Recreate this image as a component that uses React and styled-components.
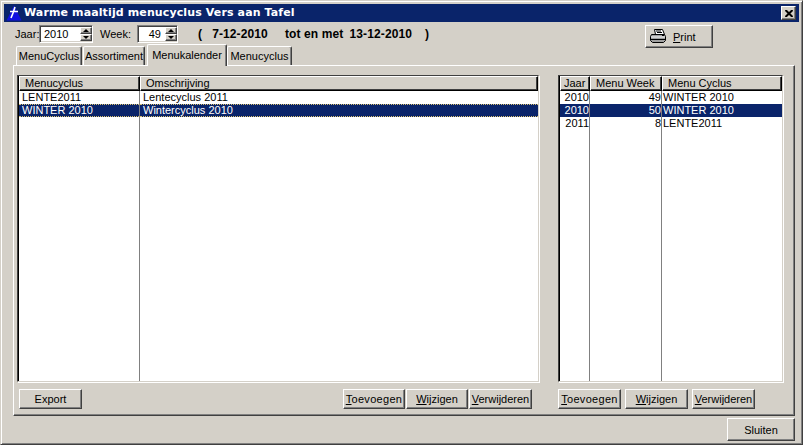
import React from 'react';
import styled, { createGlobalStyle, css } from 'styled-components';

const Global = createGlobalStyle`
  html, body { margin: 0; padding: 0; background: #d4d0c8; }
  * { box-sizing: border-box; }
`;

const raised = css`
  background: #d4d0c8;
  border: 1px solid;
  border-color: #fff #404040 #404040 #fff;
  box-shadow: inset -1px -1px 0 #808080;
`;

const Window = styled.div`
  width: 803px;
  height: 445px;
  background: #d4d0c8;
  font: 11px/14px "Liberation Sans", Arial, sans-serif;
  color: #000;
  border: 1px solid;
  border-color: #d4d0c8 #404040 #404040 #d4d0c8;
  box-shadow: inset 1px 1px 0 #fff, inset -1px -1px 0 #808080;
  padding: 3px;
  display: flex;
  flex-direction: column;
  overflow: hidden;
`;

const TitleBar = styled.div`
  height: 18px;
  flex: none;
  background: #0a246a;
  display: flex;
  align-items: center;
  padding: 0 3px 0 2px;
  color: #fff;
  font: bold 11px/18px "DejaVu Sans", Verdana, sans-serif;
  letter-spacing: 0.12px;
`;

const TitleText = styled.span`
  margin-left: 2px;
  flex: 1;
`;

const CloseBox = styled.div`
  ${raised}
  width: 15px;
  height: 14px;
  display: flex;
  align-items: center;
  justify-content: center;
`;

const Header = styled.div`
  display: flex;
  justify-content: space-between;
  flex: none;
  padding-left: 9px;
  height: 43px;
`;

const HeaderLeft = styled.div`
  display: flex;
  flex-direction: column;
`;

const Controls = styled.div`
  display: flex;
  align-items: center;
  height: 18px;
  margin-top: 3px;
  padding-left: 2px;
  white-space: nowrap;
`;

const Label = styled.span`
  flex: none;
  width: ${p => p.$w}px;
  margin-left: ${p => p.$gap || 0}px;
`;

const Spin = styled.div`
  width: ${p => p.$w}px;
  height: 18px;
  flex: none;
  background: #fff;
  border: 1px solid;
  border-color: #808080 #fff #fff #808080;
  box-shadow: inset 1px 1px 0 #404040, inset -1px -1px 0 #d4d0c8;
  display: flex;
  align-items: center;
  padding: 2px 0 2px 2px;
`;

const SpinValue = styled.span`
  flex: 1;
  text-align: ${p => p.$right ? 'right' : 'left'};
  padding: 0 ${p => p.$right ? 4 : 2}px;
`;

const SpinArrows = styled.div`
  width: 12px;
  height: 14px;
  display: flex;
  flex-direction: column;
  flex: none;
`;

const SpinArrow = styled.div`
  ${raised}
  height: 7px;
  flex: 1;
  display: flex;
  align-items: center;
  justify-content: center;
  &::after {
    content: '';
    border-left: 3px solid transparent;
    border-right: 3px solid transparent;
    ${p => p.$down ? 'border-top: 3px solid #000;' : 'border-bottom: 3px solid #000;'}
  }
`;

const DateBold = styled.span`
  font-weight: bold;
  font-size: 12px;
  margin-left: ${p => p.$gap}px;
  letter-spacing: 0.01em;
`;

const Tabs = styled.div`
  display: flex;
  align-items: flex-end;
  height: 22px;
  padding-left: 3px;
  position: relative;
`;

const Tab = styled.div`
  height: 19px;
  width: ${p => p.$w}px;
  flex: none;
  margin-left: ${p => p.$ml || 0}px;
  background: #d4d0c8;
  border-top: 1px solid #fff;
  border-left: 1px solid #fff;
  border-right: 1px solid #404040;
  border-radius: 2px 2px 0 0;
  box-shadow: inset -1px 0 0 #808080;
  text-align: center;
  line-height: 19px;
  ${p => p.$active && css`
    position: relative;
    z-index: 1;
    height: 22px;
    top: 1px;
    line-height: 20px;
  `}
`;

const PrintButton = styled.div`
  ${raised}
  width: 68px;
  height: 23px;
  margin: 3px 86px 0 0;
  display: flex;
  align-items: center;
  padding-left: 4px;
  gap: 7px;
`;

const Key = styled.span`
  text-decoration: underline;
`;

const Panel = styled.div`
  width: 782px;
  height: 351px;
  margin-left: 9px;
  flex: none;
  background: #d4d0c8;
  border: 1px solid;
  border-color: #fff #404040 #404040 #fff;
  box-shadow: inset -1px -1px 0 #808080;
  padding: 9px 11px 0 3px;
  display: grid;
  grid-template-columns: 522px 225px;
  justify-content: space-between;
  grid-template-rows: 307px 20px;
  row-gap: 7px;
`;

const Table = styled.div`
  background: #fff;
  border: 1px solid;
  border-color: #404040 #d4d0c8 #d4d0c8 #404040;
  box-shadow: inset 1px 0 0 #000, 1px 1px 0 #fff;
  display: grid;
  grid-template-columns: ${p => p.$cols};
  grid-template-rows: 15px 1fr;
  padding: 0 0 0 1px;
  position: relative;
  overflow: hidden;
`;

const HeadCell = styled.div`
  ${raised}
  height: 15px;
  padding-left: ${p => p.$pad ?? 5}px;
  line-height: 13px;
  border-right-color: #000;
  border-bottom-color: #000;
  box-shadow: inset -1px -1px 0 #404040;
  white-space: nowrap;
  overflow: hidden;
`;

const Col = styled.div`
  border-right: ${p => p.$last ? 'none' : '1px solid #808080'};
  min-width: 0;
`;

const Cell = styled.div`
  height: 13px;
  line-height: 13px;
  white-space: nowrap;
  padding: 0 ${p => p.$right ? 0 : 2}px 0 ${p => p.$left ?? 3}px;
  text-align: ${p => p.$right ? 'right' : 'left'};
  ${p => p.$sel && css`
    background: #0a246a;
    color: #fff;
  `}
  ${p => p.$focus && css`
    line-height: 11px;
    border-top: 1px dotted #d8c070;
    border-bottom: 1px dotted #d8c070;
  `}
`;

const ButtonRow = styled.div`
  display: flex;
  align-items: flex-start;
  justify-content: ${p => p.$between ? 'space-between' : 'flex-start'};
`;

const ButtonGroup = styled.div`
  display: flex;
  gap: ${p => p.$gap}px;
  padding-right: ${p => p.$end || 0}px;
`;

const Button = styled.div`
  ${raised}
  width: ${p => p.$w}px;
  height: 20px;
  text-align: center;
  line-height: 19px;
  white-space: nowrap;
  letter-spacing: ${p => p.$ls || 0}px;
`;

const ExportButton = styled(Button)`
  margin-left: 2px;
`;

const Footer = styled.div`
  flex: 1;
  display: flex;
  justify-content: flex-end;
  padding: 2px 4px 0 0;
`;

const CloseButton = styled(Button)`
  width: 68px;
  height: 23px;
  line-height: 22px;
`;

const Printer = () => (
  <svg width="16" height="15" viewBox="0 0 16 15" style={{ flex: 'none' }}>
    <path d="M4.5 0.5h8l2 5H5.5z" fill="#fff" stroke="#000" />
    <path d="M6 2h5M7 3.5h5" stroke="#000" />
    <path d="M1.5 5.5h13l1 2v4l-2 2H2.5l-2-2v-4z" fill="#a0a0a0" stroke="#000" />
    <path d="M1 8h14" stroke="#fff" />
    <path d="M1 10.5h14" stroke="#000" />
    <path d="M12 6h2v1h-2z" fill="#000" />
  </svg>
);

const Logo = () => (
  <svg width="16" height="16" viewBox="0 0 16 16" style={{ flex: 'none' }}>
    <path d="M8 0.5L15.5 15.5H0.5z" fill="#1010e0" />
    <path d="M9 2L7 8 5 13M4 6.5h8" stroke="#fff" strokeWidth="1.6" fill="none" />
  </svg>
);

const CloseGlyph = () => (
  <svg width="8" height="7" viewBox="0 0 8 7">
    <path d="M0.5 0L7.5 7M7.5 0L0.5 7" stroke="#000" strokeWidth="2" fill="none" />
  </svg>
);

const leftRows = [
  ['LENTE2011', 'Lentecyclus 2011'],
  ['WINTER 2010', 'Wintercyclus 2010'],
];
const rightRows = [
  ['2010', '49', 'WINTER 2010'],
  ['2010', '50', 'WINTER 2010'],
  ['2011', '8', 'LENTE2011'],
];

export default function App() {
  return (
    <Window>
      <Global />
      <TitleBar>
        <Logo />
        <TitleText>Warme maaltijd menucyclus Vers aan Tafel</TitleText>
        <CloseBox><CloseGlyph /></CloseBox>
      </TitleBar>
      <Header>
        <HeaderLeft>
          <Controls>
            <Label $w={24}>Jaar:</Label>
            <Spin $w={54}>
              <SpinValue>2010</SpinValue>
              <SpinArrows><SpinArrow /><SpinArrow $down /></SpinArrows>
            </Spin>
            <Label $gap={7} $w={37}>Week:</Label>
            <Spin $w={41}>
              <SpinValue $right>49</SpinValue>
              <SpinArrows><SpinArrow /><SpinArrow $down /></SpinArrows>
            </Spin>
            <DateBold $gap={20}>(</DateBold>
            <DateBold $gap={10}>7-12-2010</DateBold>
            <DateBold $gap={17}>tot en met</DateBold>
            <DateBold $gap={6}>13-12-2010</DateBold>
            <DateBold $gap={13}>)</DateBold>
          </Controls>
          <Tabs>
            <Tab $w={66}>MenuCyclus</Tab>
            <Tab $w={62} $ml={1}>Assortiment</Tab>
            <Tab $active $w={80} $ml={2}>Menukalender</Tab>
            <Tab $w={65}>Menucyclus</Tab>
          </Tabs>
        </HeaderLeft>
        <PrintButton>
          <Printer />
          <span><Key>P</Key>rint</span>
        </PrintButton>
      </Header>
      <Panel>
        <Table $cols="121px 1fr">
          <HeadCell>Menucyclus</HeadCell>
          <HeadCell>Omschrijving</HeadCell>
          <Col>
            {leftRows.map((r, i) => <Cell key={r[0]} $sel={i === 1} $focus={i === 1}>{r[0]}</Cell>)}
          </Col>
          <Col $last>
            {leftRows.map((r, i) => <Cell key={r[0]} $sel={i === 1} $focus={i === 1}>{r[1]}</Cell>)}
          </Col>
        </Table>
        <Table $cols="30px 72px 1fr">
          <HeadCell $pad={3}>Jaar</HeadCell>
          <HeadCell>Menu Week</HeadCell>
          <HeadCell>Menu Cyclus</HeadCell>
          <Col>
            {rightRows.map((r, i) => <Cell key={i} $sel={i === 1} $right>{r[0]}</Cell>)}
          </Col>
          <Col>
            {rightRows.map((r, i) => <Cell key={i} $sel={i === 1} $right>{r[1]}</Cell>)}
          </Col>
          <Col $last>
            {rightRows.map((r, i) => <Cell key={i} $sel={i === 1} $left={1}>{r[2]}</Cell>)}
          </Col>
        </Table>
        <ButtonRow $between>
          <ExportButton $w={63}>Export</ExportButton>
          <ButtonGroup $gap={1} $end={7}>
            <Button $w={62} $ls={0.3}><Key>T</Key>oevoegen</Button>
            <Button $w={62}><Key>W</Key>ijzigen</Button>
            <Button $w={63}><Key>V</Key>erwijderen</Button>
          </ButtonGroup>
        </ButtonRow>
        <ButtonRow>
          <ButtonGroup $gap={4}>
            <Button $w={63} $ls={0.3}><Key>T</Key>oevoegen</Button>
            <Button $w={63}><Key>W</Key>ijzigen</Button>
            <Button $w={63}><Key>V</Key>erwijderen</Button>
          </ButtonGroup>
        </ButtonRow>
      </Panel>
      <Footer>
        <CloseButton>Sluiten</CloseButton>
      </Footer>
    </Window>
  );
}
